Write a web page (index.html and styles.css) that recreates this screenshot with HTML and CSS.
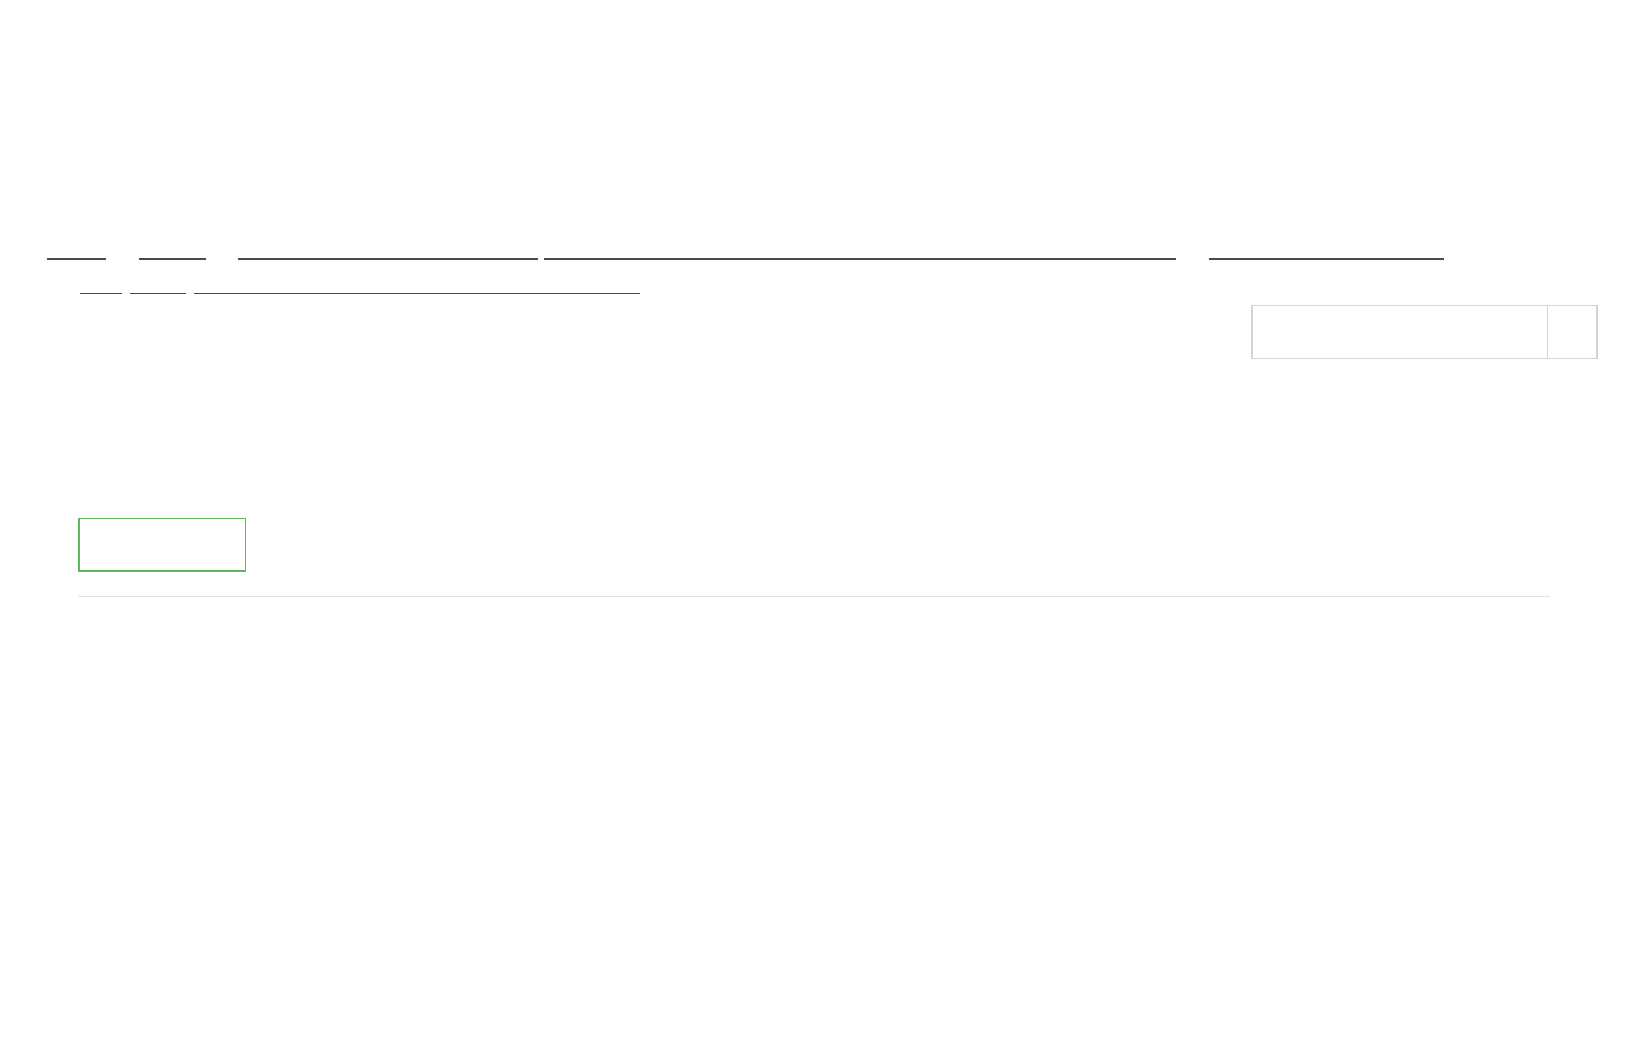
FILE: index.html
```html
<!DOCTYPE html>
<html lang="en">
<head>
    <meta charset="UTF-8">
    <meta name="viewport" content="width=device-width, initial-scale=1.0">
    <title>Page</title>
    <link rel="stylesheet" href="styles.css">
</head>
<body>
    <div class="top"></div>

    <nav class="nav">
        <a href="#" class="nav-link w1"></a>
        <a href="#" class="nav-link w2 gap"></a>
        <a href="#" class="nav-link w3 gap"></a>
        <a href="#" class="nav-link w4 tight"></a>
        <a href="#" class="nav-link w5 gap"></a>
    </nav>

    <div class="subnav">
        <a href="#" class="sub-link s1"></a>
        <a href="#" class="sub-link s2"></a>
        <a href="#" class="sub-link s3"></a>
    </div>

    <div class="search-row">
        <form class="search">
            <input type="text" class="search-input" aria-label="Search">
            <button type="submit" class="search-btn" aria-label="Go"></button>
        </form>
    </div>

    <div class="content">
        <button class="btn-success" aria-label="Action"></button>
        <hr class="divider">
    </div>
</body>
</html>
```

FILE: styles.css
```css
body {
    margin: 0;
    background-color: #fff;
    font-family: "Liberation Sans", Arial, sans-serif;
    color: #333;
}
.top {
    height: 258px;
}
.nav {
    display: flex;
    padding-left: 47px;
}
.nav-link {
    display: block;
    height: 0;
    border-bottom: 2px solid #434b55;
}
.nav-link.gap {
    margin-left: 33px;
}
.nav-link.tight {
    margin-left: 6px;
}
.w1 { width: 59px; }
.w2 { width: 67px; }
.w3 { width: 300px; margin-left: 32px !important; }
.w4 { width: 632px; }
.w5 { width: 235px; }

.subnav {
    display: flex;
    gap: 8px;
    margin-top: 33px;
    padding-left: 80px;
}
.sub-link {
    display: block;
    height: 0;
    border-bottom: 1px solid #434b55;
}
.s1 { width: 42px; }
.s2 { width: 56px; }
.s3 { width: 446px; }

.search-row {
    display: flex;
    justify-content: flex-end;
    margin-top: 11px;
    padding-right: 30px;
}
.search {
    display: flex;
    margin: 0;
    width: 347px;
    height: 54px;
    box-sizing: border-box;
    border: 1px solid #d1d5da;
    border-left-width: 2px;
    border-right-width: 2px;
}
.search-input {
    flex: 1;
    margin: 0;
    padding: 0;
    border: none;
    border-right: 1px solid #d1d5da;
    background: #fff;
    outline: none;
}
.search-btn {
    width: 48px;
    margin: 0;
    padding: 0;
    border: none;
    background: #fff;
}

.content {
    padding-left: 78px;
}
.btn-success {
    display: block;
    margin: 159px 0 0;
    padding: 0;
    width: 168px;
    height: 54px;
    box-sizing: border-box;
    background: #fff;
    border: 1px solid #5cb85c;
    border-left-width: 2px;
    border-bottom-width: 2px;
}
.divider {
    width: 1472px;
    height: 1px;
    margin: 24px 0 0;
    border: none;
    background-color: #e1e4e8;
}
```
